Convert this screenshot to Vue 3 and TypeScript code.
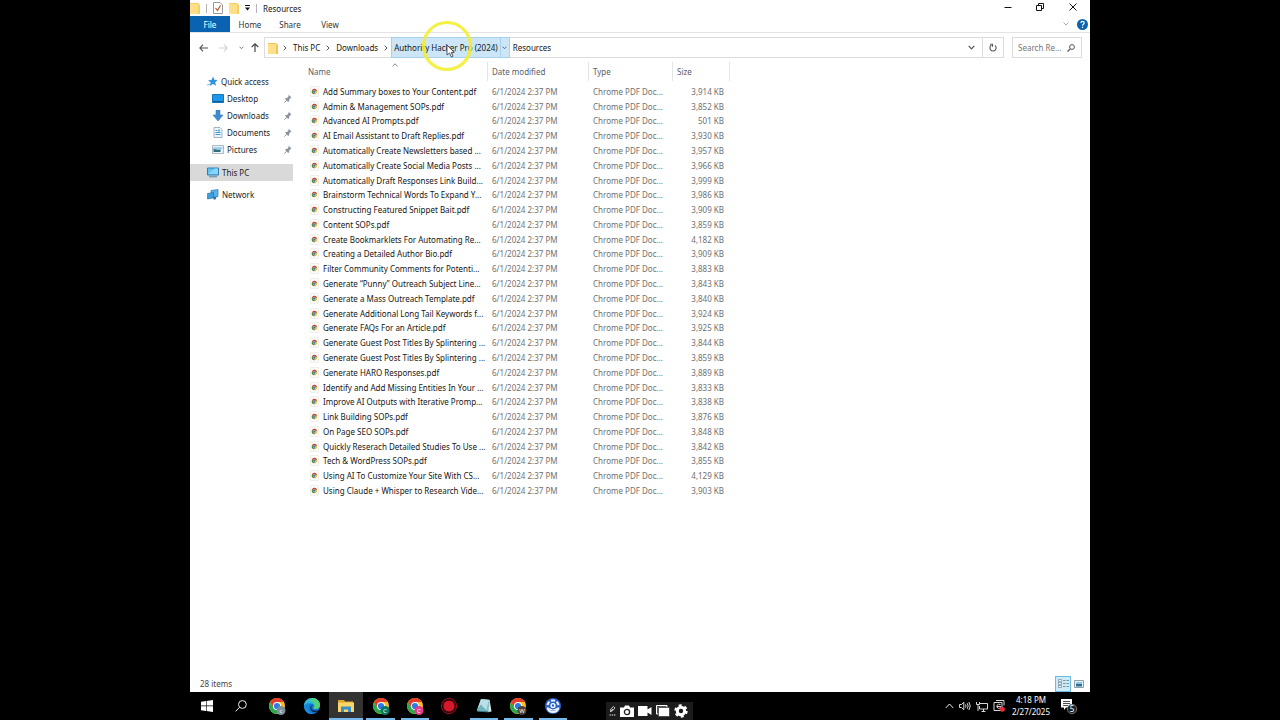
<script setup lang="ts">
interface FileRow { name: string; size: string }

const files: FileRow[] = [
  { name: 'Add Summary boxes to Your Content.pdf', size: '3,914 KB' },
  { name: 'Admin & Management SOPs.pdf', size: '3,852 KB' },
  { name: 'Advanced AI Prompts.pdf', size: '501 KB' },
  { name: 'AI Email Assistant to Draft Replies.pdf', size: '3,930 KB' },
  { name: 'Automatically Create Newsletters based ...', size: '3,957 KB' },
  { name: 'Automatically Create Social Media Posts ...', size: '3,966 KB' },
  { name: 'Automatically Draft Responses Link Build...', size: '3,999 KB' },
  { name: 'Brainstorm Technical Words To Expand Y...', size: '3,986 KB' },
  { name: 'Constructing Featured Snippet Bait.pdf', size: '3,909 KB' },
  { name: 'Content SOPs.pdf', size: '3,859 KB' },
  { name: 'Create Bookmarklets For Automating Re...', size: '4,182 KB' },
  { name: 'Creating a Detailed Author Bio.pdf', size: '3,909 KB' },
  { name: 'Filter Community Comments for Potenti...', size: '3,883 KB' },
  { name: 'Generate “Punny” Outreach Subject Line...', size: '3,843 KB' },
  { name: 'Generate a Mass Outreach Template.pdf', size: '3,840 KB' },
  { name: 'Generate Additional Long Tail Keywords f...', size: '3,924 KB' },
  { name: 'Generate FAQs For an Article.pdf', size: '3,925 KB' },
  { name: 'Generate Guest Post Titles By Splintering ...', size: '3,844 KB' },
  { name: 'Generate Guest Post Titles By Splintering ...', size: '3,859 KB' },
  { name: 'Generate HARO Responses.pdf', size: '3,889 KB' },
  { name: 'Identify and Add Missing Entities In Your ...', size: '3,833 KB' },
  { name: 'Improve AI Outputs with Iterative Promp...', size: '3,838 KB' },
  { name: 'Link Building SOPs.pdf', size: '3,876 KB' },
  { name: 'On Page SEO SOPs.pdf', size: '3,848 KB' },
  { name: 'Quickly Reserach Detailed Studies To Use ...', size: '3,842 KB' },
  { name: 'Tech & WordPress SOPs.pdf', size: '3,855 KB' },
  { name: 'Using AI To Customize Your Site With CS...', size: '4,129 KB' },
  { name: 'Using Claude + Whisper to Research Vide...', size: '3,903 KB' },
]

const pinned = ['Desktop', 'Downloads', 'Documents', 'Pictures']

interface TaskApp { id: string; kind: string; label: string; running?: boolean; active?: boolean; badge?: string; badgeColor?: string }
const apps: TaskApp[] = [
  { id: 'chrome', kind: 'chrome', label: 'Google Chrome', badge: 'c', badgeColor: '#7c8f9c' },
  { id: 'edge', kind: 'edge', label: 'Microsoft Edge' },
  { id: 'explorer', kind: 'explorer', label: 'File Explorer', running: true, active: true },
  { id: 'chrome-c', kind: 'chrome', label: 'Google Chrome, profile C', running: true, badge: 'C', badgeColor: '#00796b' },
  { id: 'chrome-p', kind: 'chrome', label: 'Google Chrome, second profile C', running: true, badge: 'C', badgeColor: '#e8398a' },
  { id: 'recorder', kind: 'recorder', label: 'Recorder' },
  { id: 'notepad', kind: 'notepad', label: 'Notepad', running: true },
  { id: 'chrome-w', kind: 'chrome', label: 'Google Chrome, profile W', running: true, badge: 'W', badgeColor: '#4e403a' },
  { id: 'blue', kind: 'blue', label: 'Screen tool', running: true },
]
</script>

<template>
  <div class="screen">
    <div class="desktop">
      <header class="titlebar">
        <div class="quick">
          <svg class="folder" viewBox="0 0 10 12"><path d="M0 1h8l2 2v9H0z" fill="#f5cf62" /><path d="M0 2h8v10H0z" fill="#ffe08a" /></svg>
          <span class="bar"></span>
          <button class="bare" aria-label="Properties">
            <svg width="10" height="12" viewBox="0 0 10 12"><path d="M.5.5H7L9.500 3v8.500h-9z" fill="#fff" stroke="#9a9a9a" /><path d="M2.500 6l2 2.500 3-5" fill="none" stroke="#b8532c" stroke-width="1.200" /></svg>
          </button>
          <button class="bare" aria-label="New folder">
            <svg class="folder" viewBox="0 0 10 12"><path d="M0 1h8l2 2v9H0z" fill="#f5cf62" /><path d="M0 2h8v10H0z" fill="#ffe08a" /></svg>
          </button>
          <button class="bare" aria-label="Customize toolbar">
            <svg width="5" height="6" viewBox="0 0 5 6"><path d="M0 .5h5" stroke="#111" /><path d="M0 2.500h5L2.500 5.500z" fill="#111" /></svg>
          </button>
          <span class="bar"></span>
          <span class="title">Resources</span>
        </div>
        <div class="controls">
          <button class="bare" aria-label="Minimize"><svg width="8" height="8" viewBox="0 0 8 8"><path d="M0.500 4.500h7" stroke="#111" /></svg></button>
          <button class="bare" aria-label="Restore"><svg width="8" height="8" viewBox="0 0 8 8" fill="none" stroke="#111"><path d="M.5 2.500h5v5h-5zM2.500 2.500v-2h5v5h-2" /></svg></button>
          <button class="bare" aria-label="Close"><svg width="8" height="8" viewBox="0 0 8 8"><path d="M.5.5l7 7M7.500.5l-7 7" stroke="#111" /></svg></button>
        </div>
      </header>

      <nav class="ribbon" aria-label="Ribbon">
        <button class="tab file">File</button>
        <button class="tab">Home</button>
        <button class="tab">Share</button>
        <button class="tab">View</button>
        <div class="ribbon-end">
          <button class="bare" aria-label="Expand ribbon"><svg width="6" height="4" viewBox="0 0 6 4"><path d="M.5.5L3 3 5.500.5" fill="none" stroke="#aaa" /></svg></button>
          <button class="bare" aria-label="Help">
            <svg width="11" height="11" viewBox="0 0 11 11"><circle cx="5.500" cy="5.500" r="5.500" fill="#0b63b0" /><path d="M3.900 4.100c0-2.200 3.300-2.200 3.300-.1 0 1.300-1.700 1.200-1.700 2.700M5.500 7.700v1.200" fill="none" stroke="#fff" stroke-width="1.200" /></svg>
          </button>
        </div>
      </nav>

      <div class="navrow">
        <div class="arrows">
          <button class="bare" aria-label="Back"><svg width="9" height="8" viewBox="0 0 9 8"><path d="M4 .7L.9 4 4 7.300M1 4h8" fill="none" stroke="#555" stroke-width="1.100" /></svg></button>
          <button class="bare" aria-label="Forward"><svg width="9" height="8" viewBox="0 0 9 8"><path d="M5 .7L8.100 4 5 7.300M8 4H0" fill="none" stroke="#d2d2d2" stroke-width="1.100" /></svg></button>
          <button class="bare" aria-label="Recent locations"><svg width="5" height="4" viewBox="0 0 5 4"><path d="M.5.7l2 2 2-2" fill="none" stroke="#777" /></svg></button>
          <button class="bare" aria-label="Up"><svg width="8" height="9" viewBox="0 0 8 9"><path d="M.7 4L4 .9 7.300 4M4 1v8" fill="none" stroke="#444" stroke-width="1.200" /></svg></button>
        </div>
        <div class="address">
          <svg class="folder" viewBox="0 0 10 12"><path d="M0 1h8l2 2v9H0z" fill="#f0c65a" /><path d="M0 2h8v10H0z" fill="#ffe08a" /></svg>
          <svg class="chev" viewBox="0 0 4 6"><path d="M.7.7L3 3 .7 5.300" fill="none" stroke="#555" /></svg>
          <button class="bare crumb">This PC</button>
          <svg class="chev" viewBox="0 0 4 6"><path d="M.7.7L3 3 .7 5.300" fill="none" stroke="#555" /></svg>
          <button class="bare crumb">Downloads</button>
          <svg class="chev" viewBox="0 0 4 6"><path d="M.7.7L3 3 .7 5.300" fill="none" stroke="#555" /></svg>
          <div class="hot">
            <button class="bare hot-name">Authority Hacker Pro (2024)</button>
            <button class="bare hot-drop" aria-label="Subfolders"><svg width="5" height="4" viewBox="0 0 5 4"><path d="M.5.7l2 2 2-2" fill="none" stroke="#567" /></svg></button>
            <svg class="pointer" viewBox="0 0 52 52">
              <circle cx="26" cy="26" r="23.500" fill="none" stroke="#f3ee2c" stroke-opacity=".88" stroke-width="3.200" />
              <path d="M26 25v10l2.500-2 1.800 4 1.700-.8-1.800-3.800h3z" fill="#fff" stroke="#333" stroke-width=".8" />
              <path d="M31.500 33.500l2-2" stroke="#555" stroke-width=".8" />
            </svg>
          </div>
          <button class="bare last">Resources</button>
          <button class="bare addr-drop" aria-label="Previous locations"><svg width="7" height="5" viewBox="0 0 7 5"><path d="M.7.9l2.800 2.900L6.300.9" fill="none" stroke="#555" stroke-width="1.200" /></svg></button>
          <button class="bare refresh" aria-label="Refresh"><svg width="8" height="9" viewBox="0 0 8 9"><path d="M2.300 2.300A3.100 3.100 0 1 0 5.900 2.400M1.200 1.300h2.300v2.400" fill="none" stroke="#555" stroke-width="1.100" /></svg></button>
        </div>
        <div class="search">
          <input type="text" placeholder="Search Re..." aria-label="Search Resources" />
          <svg width="8" height="8" viewBox="0 0 8 8"><circle cx="5" cy="3" r="2.400" fill="none" stroke="#555" /><path d="M3.200 4.800L.5 7.500" stroke="#555" stroke-width="1.200" /></svg>
        </div>
      </div>

      <div class="body">
        <nav class="side" aria-label="Folders">
          <a href="#quick" class="top">
            <svg width="11" height="11" viewBox="0 0 11 11"><path d="M6 .5l1.300 3.200 3.400.3-2.500 2.300.8 3.500-3-1.700-3.200 2 .9-3.500L1 4.300l3.500-.4z" fill="#2f94dc" /><path d="M0 9l3-1" stroke="#7db9e6" /></svg>
            <span>Quick access</span>
          </a>
          <a v-for="p in pinned" :key="p" :href="'#' + p" class="sub">
            <svg v-if="p === 'Desktop'" width="12" height="11" viewBox="0 0 12 11"><path d="M.5 1.500h11v8H.5z" fill="#1e96ea" stroke="#1673b8" /><path d="M1 8h10v1H1z" fill="#0e5d9c" /></svg>
            <svg v-else-if="p === 'Downloads'" width="12" height="11" viewBox="0 0 12 11"><path d="M4 0h4v5h3L6 11 1 5h3z" fill="#3e8dcf" stroke="#2b6fae" stroke-width=".5" /></svg>
            <svg v-else-if="p === 'Documents'" width="12" height="11" viewBox="0 0 12 11"><path d="M2 .5h6l2 2v8H2z" fill="#eef6fb" stroke="#8ca5b5" stroke-width=".8" /><path d="M3.500 3.500h2M3.500 5.500h5M3.500 7.500h5" stroke="#3c9ac9" /><path d="M6 2.500h2v2H6z" fill="#67aecf" /></svg>
            <svg v-else width="12" height="11" viewBox="0 0 12 11"><path d="M.5 1.500h11v8H.5z" fill="#eaf4fa" stroke="#9aaab3" stroke-width=".8" /><path d="M1.500 4.500h7v3.500h-7z" fill="#2f6f7d" /><path d="M1.500 3h9v2l-4 1-5-1z" fill="#9fd0ee" /></svg>
            <span>{{ p }}</span>
            <svg class="pin" width="8" height="9" viewBox="0 0 8 9"><path d="M4.500.5l3 3-1 .5-1.500 2 .2 1.300-1 .7L1 4.800l.8-.9 1.400.1 1.500-2z" fill="#8c959e" /><path d="M2.700 6.200L.4 8.600" stroke="#8c959e" /></svg>
          </a>
          <a href="#pc" class="top selected">
            <svg width="12" height="11" viewBox="0 0 12 11"><path d="M.5 1h11v7H.5z" fill="#5fc2f5" stroke="#2a7fb5" /><path d="M1 7L8 1.500h3V7z" fill="#8ad6fb" /><path d="M2 9.800h8" stroke="#4f89a8" /></svg>
            <span>This PC</span>
          </a>
          <a href="#network" class="top">
            <svg width="12" height="11" viewBox="0 0 12 11"><path d="M4 1.500L11 .5v7l-7 1z" fill="#57b4ea" stroke="#24699b" stroke-width=".6" /><path d="M.5 4.500L6.500 3.500v5.500L.5 10z" fill="#3c9fdd" stroke="#24699b" stroke-width=".6" /><path d="M6.500 8h3l-1 2.500h-2z" fill="#2b6fa0" /></svg>
            <span>Network</span>
          </a>
        </nav>

        <main class="list">
          <table>
            <colgroup><col class="c-name" /><col class="c-date" /><col class="c-type" /><col class="c-size" /></colgroup>
            <thead>
              <tr>
                <th scope="col" aria-sort="ascending"><span class="head">Name<svg class="sort" viewBox="0 0 6 4"><path d="M.5 3.200L3 .8l2.500 2.400" fill="none" stroke="#777" stroke-width=".9" /></svg></span></th>
                <th scope="col"><span class="head">Date modified</span></th>
                <th scope="col"><span class="head">Type</span></th>
                <th scope="col"><span class="head">Size</span></th>
              </tr>
            </thead>
            <tbody>
              <tr v-for="(f, i) in files" :key="i">
                <td class="name">
                  <span class="entry">
                    <svg width="9" height="11" viewBox="0 0 9 11"><path d="M.5.5h8v10h-8z" fill="#fafafa" stroke="#f1efec" /><circle cx="4.500" cy="5.600" r="2.700" fill="#eac545" /><path d="M4.500 5.600L2.100 4.200A2.700 2.700 0 0 1 7 4.500z" fill="#c8402f" /><path d="M4.500 5.600L2.100 4.200A2.700 2.700 0 0 0 4.500 8.300z" fill="#43804a" /><circle cx="4.500" cy="5.600" r="1.300" fill="#4b70b8" stroke="#eee" stroke-width=".4" /></svg>
                    <span>{{ f.name }}</span>
                  </span>
                </td>
                <td>6/1/2024 2:37 PM</td>
                <td>Chrome PDF Doc...</td>
                <td class="size">{{ f.size }}</td>
              </tr>
            </tbody>
          </table>
        </main>
      </div>

      <footer class="status">
        <span>28 items</span>
        <div class="views">
          <button class="bare view on" aria-label="Details view"><svg width="11" height="11" viewBox="0 0 11 11"><path d="M.5 1.500h3v2h-3zM.5 4.500h3v2h-3zM.5 7.500h3v2h-3z" fill="#fff" stroke="#6d8a99" stroke-width=".7" /><path d="M5 2.500h2.500M5 5.500h2.500M5 8.500h2.500M8.500 2.500H11M8.500 5.500H11M8.500 8.500H11" stroke="#7791a0" /></svg></button>
          <button class="bare view" aria-label="Large icons view"><svg width="10" height="8" viewBox="0 0 10 8"><path d="M.5.5h9v7h-9z" fill="#e5f1f8" stroke="#8ba0ac" /><path d="M2 3.500h6v3H2z" fill="#2d6f93" /><path d="M2 2h6v2H4z" fill="#8fc3e6" /></svg></button>
        </div>
      </footer>

      <div class="taskbar">
        <button class="bare sys" aria-label="Start"><svg width="12" height="12" viewBox="0 0 12 12" fill="#fff"><path d="M0 1.700l5-.7v4.600H0zM5.600.9L12 0v5.600H5.600zM0 6.300h5V11l-5-.7zM5.600 6.300H12V12l-6.400-.9z" /></svg></button>
        <button class="bare sys" aria-label="Search"><svg width="12" height="12" viewBox="0 0 12 12" fill="none" stroke="#eee"><circle cx="7.400" cy="4.500" r="3.900" /><path d="M4.600 7.300L.6 11.400" /></svg></button>
        <div class="apps">
          <button v-for="a in apps" :key="a.id" class="bare app" :class="{ running: a.running, active: a.active }" :aria-label="a.label">
            <svg v-if="a.kind === 'chrome'" width="18" height="18" viewBox="0 0 18 18">
              <circle cx="9" cy="9" r="8" fill="#fbc116" />
              <path d="M2.100 5A8 8 0 0 0 8.500 17l3.700-6.200L5.600 11z" fill="#2da94f" />
              <path d="M2.100 5A8 8 0 0 1 15.900 5H9L5.500 10.500z" fill="#e33b2e" />
              <circle cx="9" cy="9" r="4" fill="#fff" /><circle cx="9" cy="9" r="3.100" fill="#3079e8" />
              <circle cx="13" cy="13.500" r="4.500" :fill="a.badgeColor" />
              <text x="13" y="15.700" text-anchor="middle" class="badge">{{ a.badge }}</text>
            </svg>
            <svg v-else-if="a.kind === 'edge'" width="18" height="18" viewBox="0 0 18 18">
              <circle cx="9" cy="9" r="8" fill="#1673cc" />
              <path d="M1 9C1 4 5 1 9 1c5 0 8 3.500 8 7 0 3-2.500 4.300-5 4-2-.3-1.500-1.300-1-2C12 7 8 4.500 1 9z" fill="#2fb9dc" />
              <path d="M9 1c5 0 8 3.500 8 7 0 3-2.500 4.300-5 4-2-.3-1.500-1.300-1-2 1.500-3-1-6-5-6.500z" fill="#4fd07d" />
              <path d="M7.500 7C4 9 5 15.500 11 16.600 5 18.500 1 14 1 9c2-3 4.500-3.300 6.500-2z" fill="#1689dc" />
              <path d="M9.800 8.200c-1.500.8-2.300 2.800-.8 4.300 2 1.800 5 1.700 7.500.3l-.7 1.200-2 1.300c-3 .3-5.500-.8-6.300-3-.6-2 .3-3.700 2.300-4.100z" fill="#0a2442" />
            </svg>
            <svg v-else-if="a.kind === 'explorer'" width="18" height="16" viewBox="0 0 18 16"><path d="M1 2h6l1 1.500h8V14H1z" fill="#e5a52d" /><path d="M1 4.500h16V14H1z" fill="#fbd566" /><path d="M4 8.500h10V14h-3v-2.500H7V14H4z" fill="#3c8fc4" /></svg>
            <svg v-else-if="a.kind === 'recorder'" width="18" height="18" viewBox="0 0 18 18"><circle cx="9" cy="9" r="7.600" fill="#240306" stroke="#a01220" stroke-width="1" /><circle cx="9" cy="9" r="5.600" fill="#d3192a" /></svg>
            <svg v-else-if="a.kind === 'notepad'" width="18" height="18" viewBox="0 0 18 18"><path d="M6 2l9 1-1 12-12-1z" fill="#7fc0cb" /><path d="M6 2l8 .7-3 10.800L2 13z" fill="#b9e0e7" /><path d="M2 12.500l4-5 6 6.500-10-.5z" fill="#6fb3bf" /><path d="M1.500 13.500l12 1 .5 1-12-1z" fill="#3f7f8b" /><path d="M14.500 2.500l2 12-3 .5z" fill="#e5e5e5" /></svg>
            <svg v-else width="18" height="18" viewBox="0 0 18 18"><circle cx="9" cy="9" r="8" fill="#2a62c8" /><path d="M3.500 8.200a5.600 5.600 0 0 1 2-3.500M7 3.800a5.600 5.600 0 0 1 4 0M12.500 4.700a5.600 5.600 0 0 1 2 3.500M3.500 10.500a5.600 5.600 0 0 0 11 0" fill="none" stroke="#f0f5ff" stroke-width="2" /><circle cx="9" cy="8.500" r="2.600" fill="#fff" /><circle cx="9" cy="8.500" r="1.200" fill="#2a62c8" /><path d="M5 11.500q4 3 8 0" fill="none" stroke="#fff" stroke-width="1.200" /></svg>
          </button>
        </div>
        <div class="recbar">
          <svg width="7" height="12" viewBox="0 0 7 12" fill="none" stroke="#ddd"><path d="M1.500 6.500L1.800 4 4.500 1.500 6 3 3.500 5.800zM1.500 6.500L4 4" stroke-width=".9" /><path d="M.5 10h6" stroke-dasharray="1.500 .7" /></svg>
          <button class="bare" aria-label="Screenshot"><svg width="14" height="12" viewBox="0 0 14 12"><path d="M0 2.500h4L5 .5h4l1 2h4V12H0z" fill="#fff" /><circle cx="7" cy="7" r="2.600" fill="#fff" stroke="#222" stroke-width="1.300" /></svg></button>
          <button class="bare" aria-label="Record video"><svg width="14" height="10" viewBox="0 0 14 10"><path d="M0 0h9.500v3.500L13.500 1v8L9.500 6.500V10H0z" fill="#fff" /></svg></button>
          <button class="bare" aria-label="Gallery"><svg width="14" height="12" viewBox="0 0 14 12"><path d="M.5.5h10.500v8.500H.5z" fill="#555" stroke="#fff" /><path d="M2.500 2.500h11v9h-11z" fill="#fff" stroke="#222" stroke-width=".6" /></svg></button>
          <button class="bare" aria-label="Settings"><svg width="14" height="14" viewBox="0 0 14 14"><circle cx="7" cy="7" r="3.700" fill="none" stroke="#fff" stroke-width="3" /><circle cx="7" cy="7" r="5.700" fill="none" stroke="#fff" stroke-width="2" stroke-dasharray="2.980 2.980" /></svg></button>
        </div>
        <div class="tray">
          <button class="bare" aria-label="Hidden icons"><svg width="9" height="6" viewBox="0 0 9 6"><path d="M.7 5l3.800-4 3.800 4" fill="none" stroke="#eee" /></svg></button>
          <button class="bare" aria-label="Volume"><svg width="12" height="10" viewBox="0 0 12 10" fill="none" stroke="#eee" stroke-width=".9"><path d="M.5 3.500h2l2.300-2.200v7.400L2.500 6.500h-2zM6.500 3.500q1 1.500 0 3M8.200 2.200q1.900 2.800 0 5.600M9.900 1q2.700 4 0 8" /></svg></button>
          <button class="bare" aria-label="Network status"><svg width="12" height="11" viewBox="0 0 12 11" fill="none" stroke="#eee" stroke-width=".9"><path d="M4 2.500h7.500v5.500H3.500V5M5.500 10.500h4M7.500 8v2.500M.5 1v2.500h3V1M2 3.500v6.500" /></svg></button>
          <button class="bare" aria-label="Capture status"><svg width="12" height="12" viewBox="0 0 12 12"><path d="M1 2.500h8v8H1zM3 .5h8v5M7.500 4.500c-3-1-4 1-3.500 2.500s2.500 2 4 .5M4 6.500h4" fill="none" stroke="#eee" stroke-width=".9" /><circle cx="9.300" cy="9.300" r="2.500" fill="#ee2c3a" /></svg></button>
          <div class="clock"><span>4:18 PM</span><span>2/27/2025</span></div>
          <button class="bare" aria-label="Notifications, 5 new"><svg width="18" height="18" viewBox="0 0 18 18"><path d="M1 2h11v8.500H6L4 13v-2.500H1z" fill="#fff" /><path d="M3 4.500h7M3 6.500h7M3 8.500h5" stroke="#222" stroke-width=".8" /><circle cx="12" cy="12" r="4.700" fill="#222" stroke="#888" stroke-width=".8" /><text x="12" y="14.700" text-anchor="middle" class="count">5</text></svg></button>
        </div>
      </div>
    </div>
  </div>
</template>

<style>
html, body { background: #000; }
</style>

<style scoped>
* { box-sizing: border-box; }
.screen { min-height: 100vh; padding: 0 190px; background: #000; font: 8px/11px "Noto Sans", "Open Sans", sans-serif; color: #161616; display: flex; }
.desktop { flex: 1; min-width: 0; background: #fff; display: flex; flex-direction: column; white-space: nowrap; }
svg { display: block; flex: none; }
.bare { border: 0; padding: 0; margin: 0; background: none; font: inherit; color: inherit; display: flex; align-items: center; justify-content: center; }
.folder { width: 10px; height: 12px; }

.titlebar { height: 16px; display: flex; justify-content: space-between; align-items: center; }
.quick { display: flex; align-items: center; gap: 6px; }
.bar { width: 1px; height: 9px; background: #b5b5b5; }
.controls { display: flex; height: 16px; }
.controls .bare { width: 32px; height: 14px; }
.controls .bare:last-child { width: 34px; }

.ribbon { height: 17px; display: flex; align-items: stretch; border-bottom: 1px solid #e3e3e3; }
.tab { border: 0; background: none; font: inherit; color: #333; width: 40px; padding: 0; }
.tab.file { background: #0a63b1; color: #fff; }
.ribbon-end { margin-left: auto; display: flex; align-items: center; gap: 8px; padding-right: 2px; }

.navrow { display: flex; align-items: center; padding: 4px 8px 0 9px; }
.arrows { display: flex; align-items: center; gap: 11px; width: 65px; }
.arrows .bare:last-child { margin-left: -4px; }
.address { flex: 1; height: 21px; border: 1px solid #dcdcdc; display: flex; align-items: stretch; }
.address > svg { align-self: center; }
.address > .folder { margin: 0 5px 0 3px; }
.chev { width: 4px; height: 6px; }
.crumb { padding: 0 6px; }
.hot { position: relative; display: flex; margin-left: 3px; background: #cce6f8; border: 1px solid #a5d2ef; margin-top: -1px; margin-bottom: -1px; }
.hot-name { padding: 0 2px; }
.hot-drop { width: 9px; border-left: 1px solid #a5d2ef; }
.pointer { position: absolute; left: 29px; top: -18px; width: 52px; height: 52px; pointer-events: none; z-index: 2; }
.last { padding-left: 3px; }
.addr-drop { margin-left: auto; width: 21px; }
.refresh { width: 21px; border-left: 1px solid #dcdcdc; }
.search { width: 70px; height: 21px; margin-left: 8px; border: 1px solid #dcdcdc; display: flex; align-items: center; padding: 0 6px 0 5px; }
.search input { flex: 1; min-width: 0; border: 0; padding: 0; outline: 0; font: inherit; background: none; }
.search input::placeholder { color: #777; opacity: 1; }

.body { flex: 1; display: flex; padding-top: 4px; }
.side { width: 103px; padding-top: 11px; display: flex; flex-direction: column; }
.side a { display: flex; align-items: center; height: 17px; color: #1c1c1c; text-decoration: none; gap: 3px; }
.side .top { padding-left: 17px; }
.side .sub { padding-left: 22px; }
.side .selected { background: #d9d9d9; margin: 6px 0 5px; }
.side .pin { margin-left: auto; margin-right: 1px; }
.list { flex: 1; padding-left: 10px; }
table { width: 427px; height: 436px; border-collapse: collapse; table-layout: fixed; }
.c-name { width: 185px; }
.c-date { width: 101px; }
.c-type { width: 84px; }
.c-size { width: 57px; }
th { height: 22px; padding: 0 0 3px; text-align: left; font-weight: 400; color: #56606e; vertical-align: top; }
.head { display: flex; align-items: center; position: relative; height: 19px; padding-left: 4px; border-right: 1px solid #e5e5e5; }
th:first-child .head { padding-left: 5px; }
.sort { position: absolute; left: 89px; top: 1px; width: 6px; height: 4px; }
td { padding: 0 0 0 4px; color: #707070; }
td.name { padding-left: 7px; color: #161616; }
.entry { display: flex; align-items: center; gap: 4px; }
td.size { text-align: right; padding: 0 6px 0 0; }

.status { height: 17px; display: flex; justify-content: space-between; align-items: center; padding: 0 3px 0 10px; color: #444; }
.views { display: flex; }
.view { width: 16px; height: 16px; border: 1px solid transparent; }
.view.on { background: #cdeaf7; border-color: #6dbbe0; }

.taskbar { height: 28px; background: #000; display: flex; color: #fff; }
.sys { width: 34px; }
.apps { width: 310px; margin-left: 2px; display: flex; }
.app { flex: 1; position: relative; }
.app.active { background: #333; }
.app.running::after { content: ""; position: absolute; left: 3px; right: 3px; bottom: 0; height: 2px; background: #76b9ed; }
.app.active::after { left: 0; right: 0; }
.badge { font: 6px "Noto Sans", sans-serif; fill: #fff; }
.count { font: 8px "Noto Sans", sans-serif; fill: #fff; }
.recbar { margin: 10px 0 0 36px; width: 87px; padding-left: 3px; background: #1c1c1c; display: flex; align-items: center; gap: 4px; }
.tray { margin-left: auto; display: flex; align-items: center; gap: 5px; padding-right: 12px; }
.clock { display: flex; flex-direction: column; align-items: center; line-height: 12px; width: 42px; }
.clock + .bare { margin-left: 3px; }
</style>
